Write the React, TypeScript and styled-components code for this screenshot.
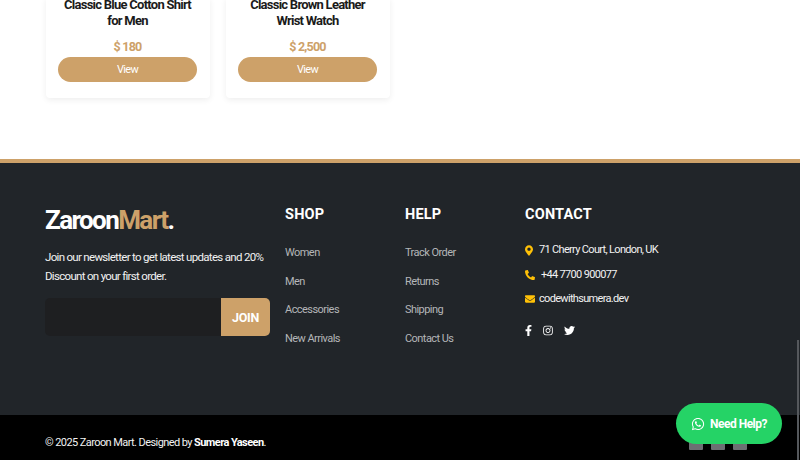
import React from "react";
import styled, { createGlobalStyle } from "styled-components";
import { FaFacebookF, FaInstagram, FaTwitter, FaMapMarkerAlt, FaPhoneAlt, FaEnvelope, FaWhatsapp } from "react-icons/fa";

const GOLD = "#cda169";

const GlobalStyle = createGlobalStyle`
  html, body {
    margin: 0;
    padding: 0;
    background: #fff;
    overflow: hidden;
    font-family: Roboto, "Liberation Sans", sans-serif;
  }
`;

const Page = styled.div`
  position: relative;
  height: 460px;
  overflow: hidden;
`;

const Products = styled.section`
  display: flex;
  gap: 16px;
  padding: 0 46px;
  height: 162px;
  margin-top: -3px;
`;

const Card = styled.div`
  width: 164px;
  height: 101px;
  padding: 0 13px 0 12px;
  box-sizing: border-box;
  background: #fff;
  border-radius: 4px;
  box-shadow: 0 2px 6px rgba(0, 0, 0, 0.07);
  text-align: center;
`;

const CardTitle = styled.h3`
  margin: 0;
  font-size: 13px;
  line-height: 16px;
  font-weight: 700;
  letter-spacing: -0.75px;
  color: #1b1b1b;
`;

const Price = styled.div`
  margin-top: 10px;
  font-size: 12.5px;
  line-height: 16px;
  font-weight: 700;
  letter-spacing: -0.8px;
  color: ${GOLD};
`;

const ViewButton = styled.button`
  display: block;
  width: 100%;
  height: 25px;
  margin-top: 2px;
  border: 0;
  border-radius: 13px;
  background: ${GOLD};
  color: #fff;
  font-family: inherit;
  font-size: 11px;
  letter-spacing: -0.7px;
`;

const Footer = styled.footer`
  display: flex;
  height: 256px;
  box-sizing: border-box;
  padding: 43px 45px 0;
  background: #212529;
  border-top: 4px solid ${GOLD};
  color: #fff;
`;

const Brand = styled.div`
  width: 240px;
`;

const Logo = styled.div`
  font-size: 26px;
  line-height: 30px;
  font-weight: 700;
  letter-spacing: -1.6px;
  margin-top: -1px;
`;

const LogoAccent = styled.span`
  color: ${GOLD};
`;

const Blurb = styled.p`
  width: 225px;
  margin: 13px 0 0;
  font-size: 11.5px;
  line-height: 18.5px;
  letter-spacing: -0.69px;
  color: #f2f2f2;
`;

const Newsletter = styled.div`
  display: flex;
  width: 225px;
  height: 38px;
  margin-top: 13px;
  border-radius: 5px;
  overflow: hidden;
  background: #1e1f21;
`;

const EmailField = styled.div`
  flex: 1;
`;

const JoinButton = styled.button`
  width: 49px;
  border: 0;
  background: ${GOLD};
  color: #fff;
  font-family: inherit;
  font-size: 12.5px;
  font-weight: 700;
  letter-spacing: -0.3px;
`;

const LinkColumn = styled.div`
  width: 120px;
`;

const ContactColumn = styled.div`
  flex: 1;
`;

const Heading = styled.h4`
  margin: 0;
  font-size: 14.5px;
  line-height: 18px;
  font-weight: 700;
  letter-spacing: 0.2px;
`;

const LinkList = styled.ul`
  display: flex;
  flex-direction: column;
  gap: 10.7px;
  margin: 20px 0 0;
  padding: 0;
  list-style: none;
`;

const LinkItem = styled.li`
  font-size: 11px;
  line-height: 18px;
  letter-spacing: -0.55px;
  color: #b4b6b8;
`;

const ContactList = styled.div`
  display: flex;
  flex-direction: column;
  gap: 6.5px;
  margin-top: 17px;
`;

const ContactRow = styled.div<{ $gap: number; $iconW: number; $iconH: number }>`
  display: flex;
  align-items: center;
  gap: ${(p) => p.$gap}px;
  font-size: 11px;
  line-height: 18px;
  letter-spacing: -0.68px;
  color: #f2f2f2;

  svg {
    width: ${(p) => p.$iconW}px;
    height: ${(p) => p.$iconH}px;
    color: #ffc107;
  }
`;

const Socials = styled.div`
  display: flex;
  align-items: center;
  gap: 11px;
  margin-top: 17px;
  font-size: 11px;
  color: #fff;

  svg:nth-child(1) {
    width: 7px;
  }
  svg:nth-child(2) {
    width: 10px;
  }
`;

const BottomBar = styled.div`
  display: flex;
  align-items: center;
  justify-content: space-between;
  height: 45px;
  padding: 10px 53px 0 45px;
  box-sizing: border-box;
  background: #000;
  color: #f2f2f2;
  font-size: 11px;
  letter-spacing: -0.58px;
`;

const Strong = styled.strong`
  font-weight: 700;
  color: #fff;
`;

const PayIcons = styled.div`
  display: flex;
  gap: 8px;
`;

const PayIcon = styled.div`
  width: 14px;
  height: 14px;
  border-radius: 1px;
  background: #6c6f73;
`;

const HelpButton = styled.button`
  position: absolute;
  right: 18px;
  bottom: 16px;
  display: flex;
  align-items: center;
  gap: 5px;
  width: 106px;
  height: 41px;
  padding: 0 0 0 15px;
  border: 0;
  border-radius: 21px;
  background: #25d366;
  color: #fff;
  font-family: inherit;
  font-size: 12px;
  font-weight: 700;
  letter-spacing: -0.5px;
  white-space: nowrap;

  svg {
    width: 14px;
    height: 14px;
  }
`;

const ScrollThumb = styled.div`
  position: absolute;
  right: 1px;
  top: 340px;
  width: 2px;
  height: 120px;
  background: #55585c;
`;

const products = [
  { title: "Classic Blue Cotton Shirt for Men", price: "$ 180" },
  { title: "Classic Brown Leather Wrist Watch", price: "$ 2,500" },
];

const shopLinks = ["Women", "Men", "Accessories", "New Arrivals"];
const helpLinks = ["Track Order", "Returns", "Shipping", "Contact Us"];

export default function App() {
  return (
    <Page>
      <GlobalStyle />
      <Products>
        {products.map((p) => (
          <Card key={p.title}>
            <CardTitle>{p.title}</CardTitle>
            <Price>{p.price}</Price>
            <ViewButton>View</ViewButton>
          </Card>
        ))}
      </Products>
      <Footer>
        <Brand>
          <Logo>
            Zaroon<LogoAccent>Mart</LogoAccent>.
          </Logo>
          <Blurb>Join our newsletter to get latest updates and 20% Discount on your first order.</Blurb>
          <Newsletter>
            <EmailField />
            <JoinButton>JOIN</JoinButton>
          </Newsletter>
        </Brand>
        <LinkColumn>
          <Heading>SHOP</Heading>
          <LinkList>
            {shopLinks.map((l) => (
              <LinkItem key={l}>{l}</LinkItem>
            ))}
          </LinkList>
        </LinkColumn>
        <LinkColumn>
          <Heading>HELP</Heading>
          <LinkList>
            {helpLinks.map((l) => (
              <LinkItem key={l}>{l}</LinkItem>
            ))}
          </LinkList>
        </LinkColumn>
        <ContactColumn>
          <Heading>CONTACT</Heading>
          <ContactList>
            <ContactRow $gap={6} $iconW={8} $iconH={11}><FaMapMarkerAlt />71 Cherry Court, London, UK</ContactRow>
            <ContactRow $gap={6} $iconW={10} $iconH={10}><FaPhoneAlt />+44 7700 900077</ContactRow>
            <ContactRow $gap={4} $iconW={10} $iconH={10}><FaEnvelope />codewithsumera.dev</ContactRow>
          </ContactList>
          <Socials>
            <FaFacebookF />
            <FaInstagram />
            <FaTwitter />
          </Socials>
        </ContactColumn>
      </Footer>
      <BottomBar>
        <span>© 2025 Zaroon Mart. Designed by <Strong>Sumera Yaseen</Strong>.</span>
        <PayIcons>
          <PayIcon />
          <PayIcon />
          <PayIcon />
        </PayIcons>
      </BottomBar>
      <HelpButton><FaWhatsapp />Need Help?</HelpButton>
      <ScrollThumb />
    </Page>
  );
}
